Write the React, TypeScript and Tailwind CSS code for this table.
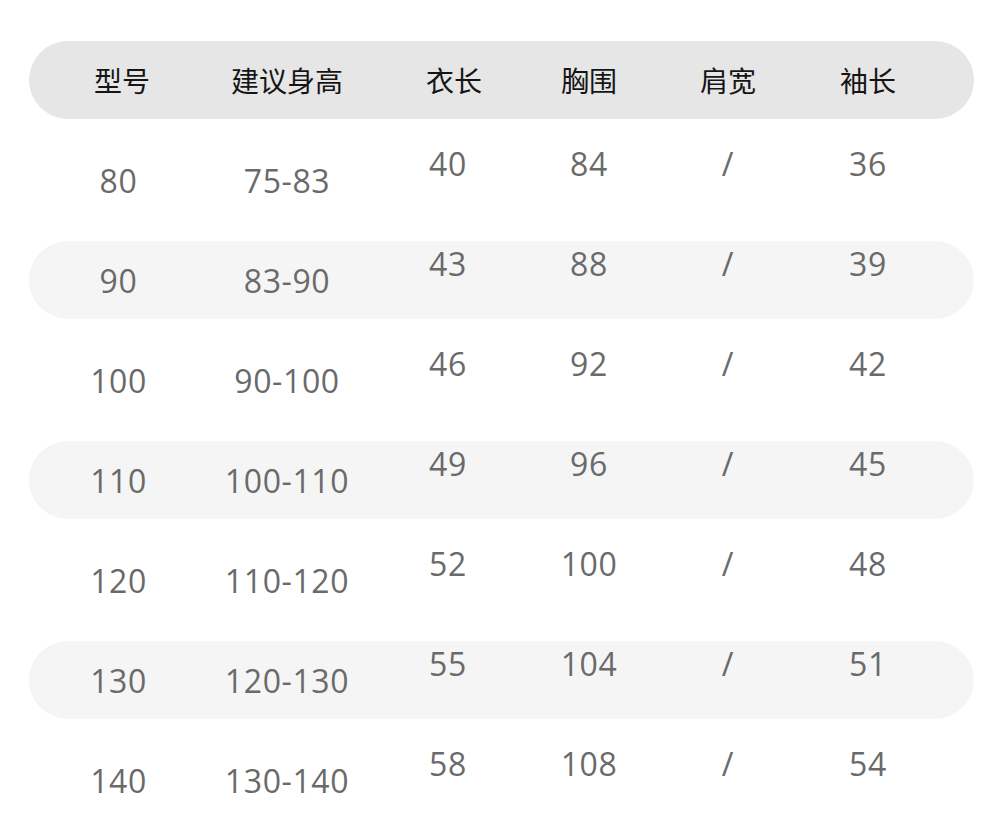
import React from "react";

const rows = [
  ["80", "75-83", "40", "84", "/", "36"],
  ["90", "83-90", "43", "88", "/", "39"],
  ["100", "90-100", "46", "92", "/", "42"],
  ["110", "100-110", "49", "96", "/", "45"],
  ["120", "110-120", "52", "100", "/", "48"],
  ["130", "120-130", "55", "104", "/", "51"],
  ["140", "130-140", "58", "108", "/", "54"],
];

const headers = ["型号", "建议身高", "衣长", "胸围", "肩宽", "袖长"];

const grid = "grid grid-cols-[182px_152px_170px_112px_166px_114px_1fr] items-center";

export default function App() {
  return (
    <div className="w-[1000px] h-[814px] overflow-hidden bg-white pt-[41px] pl-[29px] pr-[26px] flex flex-col gap-[22px]">
      <div
        className={`${grid} h-[78px] shrink-0 rounded-full bg-[#e6e6e6] text-[28px] text-[#151515]`}
        style={{ fontFamily: '"Noto Sans CJK SC", "Noto Sans", sans-serif' }}
      >
        <div className="text-center pl-[4px]">{headers[0]}</div>
        <div className="text-center">{headers[1]}</div>
        <div className="text-center pl-[12px]">{headers[2]}</div>
        <div className="text-center">{headers[3]}</div>
        <div className="text-center">{headers[4]}</div>
        <div className="text-center">{headers[5]}</div>
        <div />
      </div>
      {rows.map((r, i) => (
        <div
          key={i}
          className={`${grid} h-[78px] shrink-0 rounded-full text-[32px] leading-none tracking-[0.6px] text-[#6a6a6a] ${
            i % 2 === 1 ? "bg-[#f5f5f5]" : "bg-white"
          }`}
          style={{ fontFamily: '"Open Sans", "Noto Sans", sans-serif' }}
        >
          <div className="text-center pt-[2px] pr-[3px]">{r[0]}</div>
          <div className="text-center pt-[2px]">{r[1]}</div>
          <div className="text-center pb-[32px]">{r[2]}</div>
          <div className="text-center pb-[32px]">{r[3]}</div>
          <div className="text-center pb-[32px]">{r[4]}</div>
          <div className="text-center pb-[32px]">{r[5]}</div>
          <div />
        </div>
      ))}
    </div>
  );
}
